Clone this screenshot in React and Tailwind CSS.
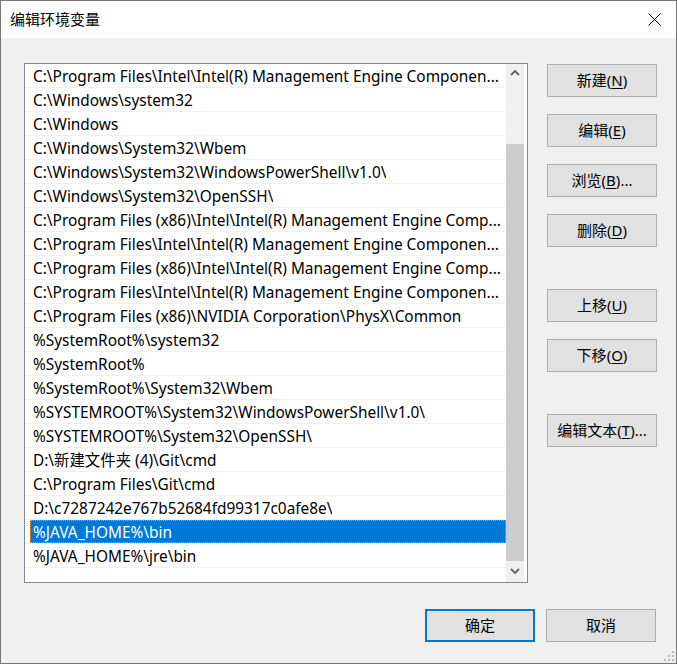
import React from "react";

const paths = [
    "C:\\Program Files\\Intel\\Intel(R) Management Engine Componen...",
    "C:\\Windows\\system32",
    "C:\\Windows",
    "C:\\Windows\\System32\\Wbem",
    "C:\\Windows\\System32\\WindowsPowerShell\\v1.0\\",
    "C:\\Windows\\System32\\OpenSSH\\",
    "C:\\Program Files (x86)\\Intel\\Intel(R) Management Engine Comp...",
    "C:\\Program Files\\Intel\\Intel(R) Management Engine Componen...",
    "C:\\Program Files (x86)\\Intel\\Intel(R) Management Engine Comp...",
    "C:\\Program Files\\Intel\\Intel(R) Management Engine Componen...",
    "C:\\Program Files (x86)\\NVIDIA Corporation\\PhysX\\Common",
    "%SystemRoot%\\system32",
    "%SystemRoot%",
    "%SystemRoot%\\System32\\Wbem",
    "%SYSTEMROOT%\\System32\\WindowsPowerShell\\v1.0\\",
    "%SYSTEMROOT%\\System32\\OpenSSH\\",
    "D:\\新建文件夹 (4)\\Git\\cmd",
    "C:\\Program Files\\Git\\cmd",
    "D:\\c7287242e767b52684fd99317c0afe8e\\",
    "%JAVA_HOME%\\bin",
    "%JAVA_HOME%\\jre\\bin",
];

const selected = 19;

function Btn({ label, hotkey, tail = "", primary = false }) {
    return (
        <div
            className={
                "w-[110px] h-[33px] flex items-center justify-center bg-[#e1e1e1] text-[15px] text-black " +
                (primary ? "border-2 border-[#0078d7]" : "border border-[#adadad]")
            }
        >
            <span>
                {label}
                {hotkey && (
                    <>
                        (<span className="underline underline-offset-2">{hotkey}</span>)
                    </>
                )}
                {tail}
            </span>
        </div>
    );
}

function Chevron({ up }) {
    return (
        <svg width="10" height="7" viewBox="0 0 10 7">
            <path
                d={up ? "M1 6 L5 2 L9 6" : "M1 1 L5 5 L9 1"}
                fill="none"
                stroke="#606060"
                strokeWidth="1.8"
            />
        </svg>
    );
}

export default function App() {
    return (
        <div
            className="w-[677px] h-[664px] flex flex-col border border-[#777777] bg-[#f0f0f0] overflow-hidden"
            style={{ fontFamily: '"Noto Sans", "Noto Sans CJK SC", sans-serif' }}
        >
            {/* title bar */}
            <div className="h-[37px] bg-white flex items-center justify-between shrink-0">
                <div className="pl-[9px] text-[15px] text-black">编辑环境变量</div>
                <div className="w-[46px] h-[37px] flex items-center justify-center mr-[-1px]">
                    <svg width="13" height="13" viewBox="0 0 13 13">
                        <path d="M0.5 0.5 L12.5 12.5 M12.5 0.5 L0.5 12.5" stroke="#000" strokeWidth="1" />
                    </svg>
                </div>
            </div>

            <div className="flex-1 relative flex flex-col pl-[23px] pt-[25px]">
                <div className="flex">
                    {/* list box */}
                    <div className="w-[504px] h-[520px] border border-[#828790] bg-white flex pl-px pr-[2px]">
                        <div className="w-[480px] flex flex-col">
                            {paths.map((p, i) => (
                                <div key={i} className="h-[24px] border-b border-[#f0f0f0] flex">
                                    {i === selected ? (
                                        <div className="ml-[4px] w-[476px] h-[23px] bg-[#0078d7] outline-1 outline-dotted outline-[#e89a3c] -outline-offset-1 text-white text-[15.4px] leading-[26px] pl-[3px] whitespace-nowrap overflow-hidden">
                                            {p}
                                        </div>
                                    ) : (
                                        <div className="h-[23px] pl-[7px] text-[15.4px] leading-[26px] text-black whitespace-nowrap overflow-hidden">
                                            {p}
                                        </div>
                                    )}
                                </div>
                            ))}
                        </div>
                        {/* scrollbar */}
                        <div className="w-[18px] flex flex-col bg-[#f0f0f0]">
                            <div className="h-[17px] flex items-center justify-center">
                                <Chevron up />
                            </div>
                            <div className="flex-1 flex flex-col">
                                <div className="h-[63px]"></div>
                                <div className="flex-1 bg-[#cdcdcd]"></div>
                            </div>
                            <div className="h-[21px] flex items-center justify-center">
                                <Chevron />
                            </div>
                        </div>
                    </div>

                    {/* right buttons */}
                    <div className="ml-[19px] pt-[1px] flex flex-col">
                        <Btn label="新建" hotkey="N" />
                        <div className="h-[17px]"></div>
                        <Btn label="编辑" hotkey="E" />
                        <div className="h-[17px]"></div>
                        <Btn label="浏览" hotkey="B" tail="..." />
                        <div className="h-[17px]"></div>
                        <Btn label="删除" hotkey="D" />
                        <div className="h-[42px]"></div>
                        <Btn label="上移" hotkey="U" />
                        <div className="h-[17px]"></div>
                        <Btn label="下移" hotkey="O" />
                        <div className="h-[42px]"></div>
                        <Btn label="编辑文本" hotkey="T" tail="..." />
                    </div>
                </div>

                {/* bottom buttons */}
                <div className="flex justify-end gap-[11px] pr-[20px] mt-[26px]">
                    <Btn label="确定" primary />
                    <Btn label="取消" />
                </div>

                {/* resize grip */}
                <div className="absolute right-[1px] bottom-[1px]">
                    <svg width="11" height="11" viewBox="0 0 11 11">
                        <g fill="#b9b9b9">
                            <rect x="8" y="0" width="2" height="2" />
                            <rect x="4" y="4" width="2" height="2" />
                            <rect x="8" y="4" width="2" height="2" />
                            <rect x="0" y="8" width="2" height="2" />
                            <rect x="4" y="8" width="2" height="2" />
                            <rect x="8" y="8" width="2" height="2" />
                        </g>
                    </svg>
                </div>
            </div>
        </div>
    );
}
